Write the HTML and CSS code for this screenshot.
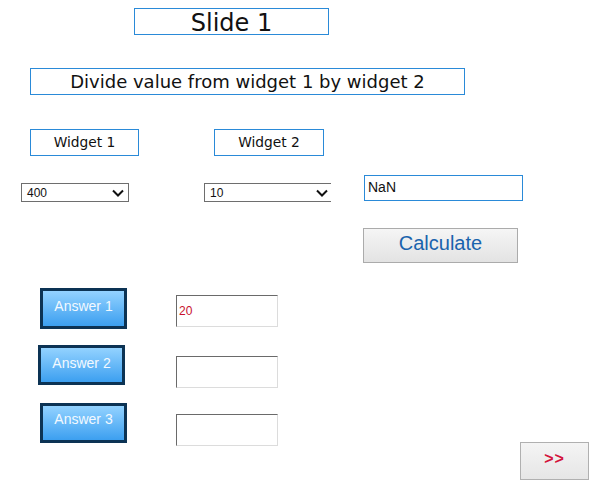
FILE: index.html
```html
<!DOCTYPE html>
<html>
<head>
<meta charset="utf-8">
<link rel="stylesheet" href="styles.css">
</head>
<body>
<div class="page">
  <div class="title">Slide 1</div>
  <div class="heading">Divide value from widget 1 by widget 2</div>
  <div class="labels">
    <div class="label label-1">Widget 1</div>
    <div class="label label-2">Widget 2</div>
  </div>
  <div class="inputs">
    <div class="select select-1">
      <span class="select-value">400</span>
      <svg class="chev" width="12" height="8" viewBox="0 0 12 8"><path d="M1 1.5 L6 6.5 L11 1.5" fill="none" stroke="#111" stroke-width="2"/></svg>
    </div>
    <div class="clip">
      <div class="select select-2">
        <span class="select-value">10</span>
        <svg class="chev" width="12" height="8" viewBox="0 0 12 8"><path d="M1 1.5 L6 6.5 L11 1.5" fill="none" stroke="#111" stroke-width="2"/></svg>
      </div>
    </div>
    <div class="result">NaN</div>
  </div>
  <div class="calc-row">
    <div class="calc">Calculate</div>
  </div>
  <div class="answers">
    <div class="answer-row row-1">
      <div class="answer-btn">Answer 1</div>
      <div class="field"><span class="field-value">20</span></div>
    </div>
    <div class="answer-row row-2">
      <div class="answer-btn">Answer 2</div>
      <div class="field"></div>
    </div>
    <div class="answer-row row-3">
      <div class="answer-btn">Answer 3</div>
      <div class="field"></div>
      <div class="next">&gt;&gt;</div>
    </div>
  </div>
</div>
</body>
</html>
```
FILE: styles.css
```css
* { box-sizing: border-box; }
html, body { margin: 0; padding: 0; background: #fff; }
body { width: 610px; height: 487px; overflow: hidden; font-family: "DejaVu Sans", Verdana, sans-serif; color: #111; }
.page { display: flex; flex-direction: column; align-items: flex-start; }

.title {
  margin: 8px 0 0 134px;
  width: 195px; height: 27px;
  border: 1px solid #2a8ad8;
  font-size: 24px; line-height: 28px;
  text-align: center;
}
.heading {
  margin: 33px 0 0 30px;
  width: 435px; height: 27px;
  border: 1px solid #2a8ad8;
  font-size: 18px; line-height: 25px;
  text-align: center;
}
.labels { display: flex; margin: 34px 0 0 30px; gap: 75px; }
.label {
  width: 109px; height: 27px;
  border: 1px solid #2a8ad8;
  font-size: 13.8px; line-height: 24px;
  text-align: center;
}
.label-2 { width: 110px; }

.inputs { display: flex; align-items: flex-start; margin: 19px 0 0 21px; }
.select {
  display: flex; align-items: center; justify-content: space-between;
  height: 19px;
  border: 1px solid #6e6e6e;
  font-family: "Liberation Sans", Arial, sans-serif; font-size: 12px;
  padding: 0 4px 0 5px;
}
.select-1 { width: 108px; margin-top: 8px; }
.clip { width: 127px; overflow: hidden; margin: 8px 0 0 75px; }
.select-2 { width: 129px; }
.chev { display: block; }
.result {
  margin-left: 33px;
  width: 159px; height: 26px;
  border: 1px solid #2a8ad8;
  font-family: "Liberation Sans", Arial, sans-serif; font-size: 14px;
  line-height: 22px; padding-left: 3px;
}

.calc-row { margin: 26px 0 0 363px; }
.calc {
  width: 155px; height: 35px;
  border: 1px solid #ababab;
  background: linear-gradient(#f5f5f5, #e3e3e3);
  color: #1a63ad;
  font-family: "Liberation Sans", Arial, sans-serif; font-size: 20px;
  line-height: 29px; text-align: center;
}

.answers { display: flex; flex-direction: column; width: 610px; margin-top: 25px; }
.answer-row { display: flex; align-items: flex-start; }
.answer-btn {
  width: 87px; height: 41px;
  border: 3px solid #0c3354;
  background: linear-gradient(#93d2ff, #3c9ff0);
  color: #f2f9ff;
  font-family: "Liberation Sans", Arial, sans-serif; font-size: 14px;
  line-height: 31px; text-align: center;
}
.field {
  width: 102px; height: 32px;
  border-top: 1px solid #6a6a6a; border-left: 1px solid #6a6a6a;
  border-right: 1px solid #dcdcdc; border-bottom: 1px solid #dcdcdc;
  font-family: "Liberation Sans", Arial, sans-serif; font-size: 12px;
  line-height: 30px; padding-left: 2px;
}
.field-value { color: #c8102e; }
.row-1 .answer-btn { margin-left: 40px; }
.row-1 .field { margin: 7px 0 0 49px; }
.row-2 { margin-top: 16px; }
.row-2 .answer-btn { margin-left: 38px; height: 40px; line-height: 30px; }
.row-2 .field { margin: 11px 0 0 51px; }
.row-3 { margin-top: 15px; }
.row-3 .answer-btn { margin-left: 40px; height: 40px; line-height: 27px; }
.row-3 .field { margin: 11px 0 0 49px; }
.next {
  margin: 39px 21px 0 auto;
  width: 69px; height: 38px;
  border: 1px solid #b0b0b0;
  background: linear-gradient(#f4f4f4, #e6e6e6);
  color: #d3143c;
  font-family: "Liberation Sans", Arial, sans-serif; font-size: 16px; font-weight: bold;
  letter-spacing: 1px;
  line-height: 32px; text-align: center;
}
```
